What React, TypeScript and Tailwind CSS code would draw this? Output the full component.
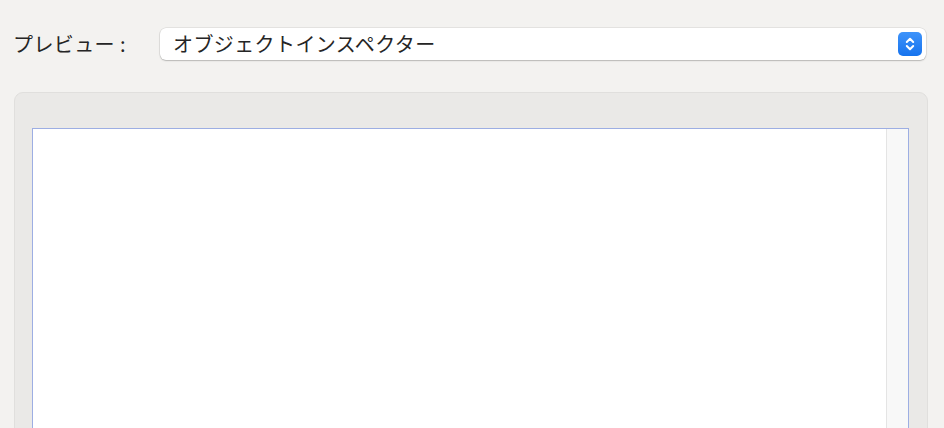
export default function App() {
  return (
    <div
      className="w-[944px] h-[428px] overflow-hidden bg-[#f3f2f0] text-[#252525]"
      style={{ fontFamily: '"Noto Sans CJK JP", "Noto Sans", sans-serif' }}
    >
      <div className="flex items-center pt-[28px] pl-[13px] pr-[18px]">
        <span className="w-[147px] text-[20px] leading-[32px] tracking-[0.4px]">
          プレビュー :
        </span>
        <div className="flex-1 h-[32px] flex items-center justify-between rounded-[6px] bg-white pl-[13px] pr-[4px] shadow-[0_0_0_0.5px_rgba(0,0,0,0.12),0_1px_1.5px_rgba(0,0,0,0.2)]">
          <span className="text-[20px] leading-[32px] tracking-[0.4px]">オブジェクトインスペクター</span>
          <div className="w-[24px] h-[24px] rounded-[5px] bg-gradient-to-b from-[#3d93fa] to-[#1573ee] flex items-center justify-center">
            <svg width="10" height="16" viewBox="0 0 10 16" fill="none" stroke="white" strokeWidth="2" strokeLinecap="round" strokeLinejoin="round">
              <path d="M1.8 6 L5 2.8 L8.2 6" />
              <path d="M1.8 10 L5 13.2 L8.2 10" />
            </svg>
          </div>
        </div>
      </div>
      <div className="mt-[32px] ml-[14px] w-[914px] h-[400px] rounded-[9px] bg-[#eae9e7] border border-[#e0dfdd] pt-[35px] pl-[17px]">
        <div className="w-[877px] h-[400px] bg-white border border-[#9daee3] flex justify-end">
          <div className="w-[22px] h-full bg-[#f8f8f8] border-l border-[#e4e4e4]" />
        </div>
      </div>
    </div>
  );
}
